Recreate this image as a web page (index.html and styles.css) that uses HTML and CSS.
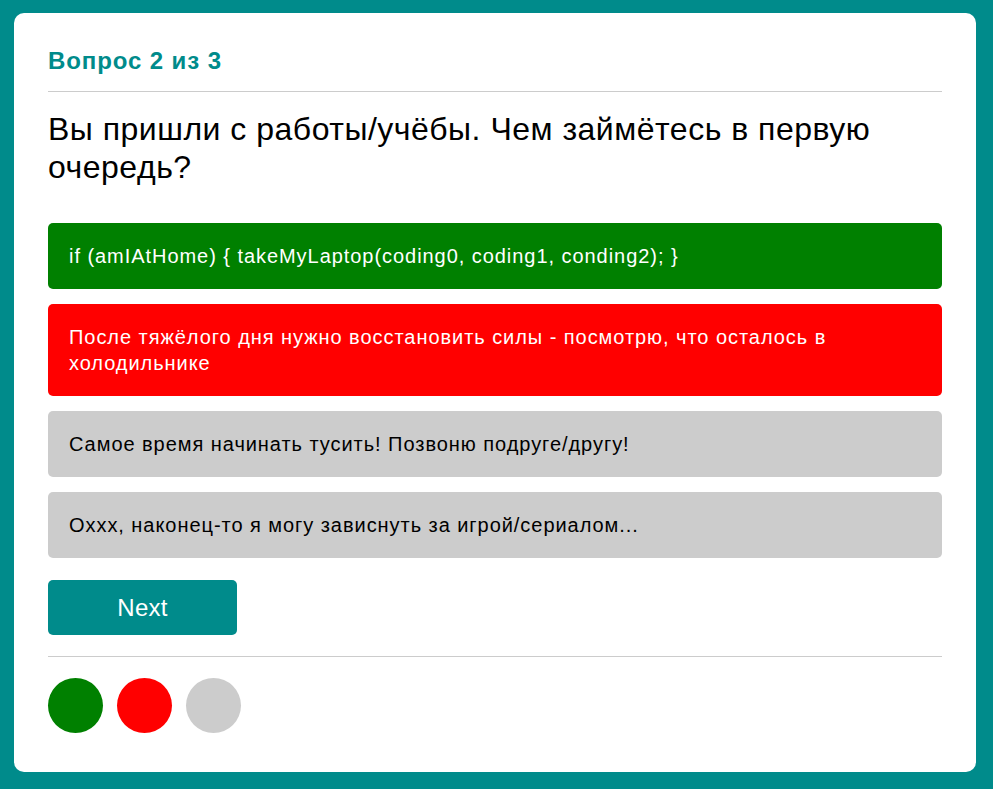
FILE: index.html
```html
<!DOCTYPE html>
<html lang="ru">
<head>
<meta charset="utf-8">
<title>Quiz</title>
<link rel="stylesheet" href="styles.css">
</head>
<body>
<div class="card">
  <h2 class="title">Вопрос 2 из 3</h2>
  <h1 class="question">Вы пришли с работы/учёбы. Чем займётесь в первую очередь?</h1>
  <div class="options">
    <div class="option correct">if (amIAtHome) { takeMyLaptop(coding0, coding1, conding2); }</div>
    <div class="option wrong">После тяжёлого дня нужно восстановить силы - посмотрю, что осталось в холодильнике</div>
    <div class="option">Самое время начинать тусить! Позвоню подруге/другу!</div>
    <div class="option">Оxxx, наконец-то я могу зависнуть за игрой/сериалом...</div>
  </div>
  <button class="next">Next</button>
  <div class="progress">
    <span class="dot dot-green"></span>
    <span class="dot dot-red"></span>
    <span class="dot dot-gray"></span>
  </div>
</div>
</body>
</html>
```

FILE: styles.css
```css
html, body {
  margin: 0;
  padding: 0;
  background: #008b8b;
  font-family: "Liberation Sans", Arial, sans-serif;
}
body {
  padding-top: 13px;
  padding-left: 14px;
  height: 789px;
  box-sizing: border-box;
}
.card {
  width: 962px;
  box-sizing: border-box;
  background: #fff;
  border-radius: 10px;
  padding: 34px 34px 39px;
}
.title {
  margin: 0;
  font-size: 24px;
  line-height: 28px;
  font-weight: bold;
  letter-spacing: 0.9px;
  color: #008b8b;
  padding-bottom: 16px;
  border-bottom: 1px solid #cccccc;
}
.question {
  margin: 18px 0 0;
  font-size: 32px;
  line-height: 38px;
  font-weight: normal;
  letter-spacing: 0.5px;
  color: #000;
}
.options {
  margin-top: 37px;
  display: flex;
  flex-direction: column;
  gap: 15px;
}
.option {
  background: #cccccc;
  color: #000;
  font-size: 20px;
  line-height: 26px;
  letter-spacing: 0.95px;
  padding: 20px 21px;
  border-radius: 5px;
}
.option.correct {
  background: #008000;
  color: #fff;
}
.option.wrong {
  background: #ff0000;
  color: #fff;
}
.next {
  display: block;
  margin-top: 22px;
  width: 189px;
  height: 55px;
  border: none;
  border-radius: 5px;
  background: #008b8b;
  color: #fff;
  font-family: "Liberation Sans", Arial, sans-serif;
  font-size: 24px;
  letter-spacing: 0.25px;
  padding: 0;
}
.progress {
  margin-top: 21px;
  border-top: 1px solid #cccccc;
  padding-top: 21px;
  display: flex;
  gap: 14px;
}
.dot {
  width: 55px;
  height: 55px;
  border-radius: 50%;
  display: block;
}
.dot-green { background: #008000; }
.dot-red { background: #ff0000; }
.dot-gray { background: #cccccc; }
```
